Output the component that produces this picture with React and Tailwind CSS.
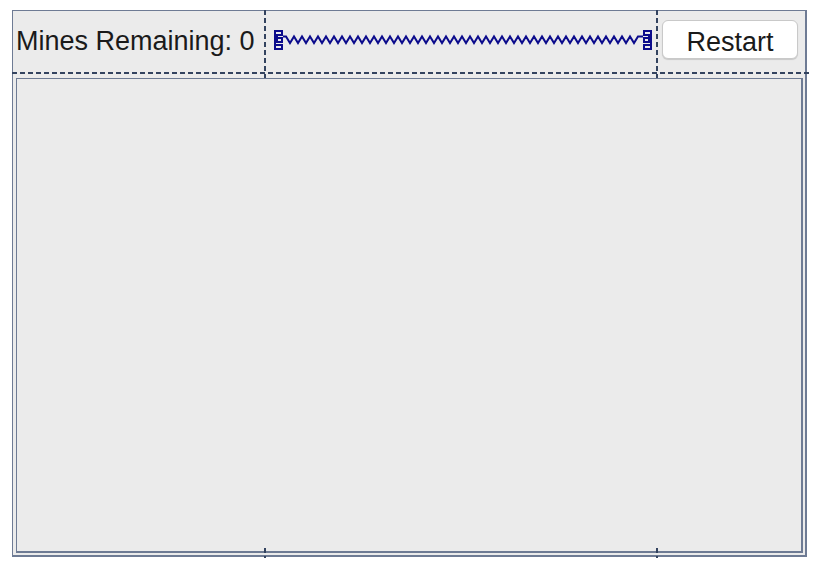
import { useMemo } from 'react'

const NAVY = '#0c0c8c'

// ends of the spring strut: three stacked boxes
function StrutEnd({ flip }) {
  return (
    <svg width="9" height="20" viewBox="0 0 9 20" shapeRendering="crispEdges" className={flip ? '-scale-x-100' : ''}>
      <rect x="1" y="1" width="7" height="4" fill="none" stroke={NAVY} strokeWidth="2" />
      <rect x="0" y="6" width="2" height="8" fill={NAVY} />
      <rect x="3" y="8" width="5" height="4" fill="none" stroke={NAVY} strokeWidth="2" />
      <rect x="2" y="6" width="2" height="2" fill={NAVY} />
      <rect x="1" y="15" width="7" height="4" fill="none" stroke={NAVY} strokeWidth="2" />
    </svg>
  )
}

function Spring() {
  const points = useMemo(() => {
    const pts = ['17,25.5', '20,25.5']
    for (let x = 24; x <= 368; x += 8) {
      pts.push(`${x},32`)
      pts.push(`${x + 4},25.5`)
    }
    pts.push('377,25.5')
    return pts.join(' ')
  }, [])

  return (
    <div className="relative w-[390px] h-[61px] shrink-0">
      <div className="absolute left-[8px] top-[19px]">
        <StrutEnd />
      </div>
      <svg width="390" height="61" className="absolute left-0 top-0">
        <polyline points={points} fill="none" stroke={NAVY} strokeWidth="2" strokeLinejoin="miter" />
      </svg>
      <div className="absolute left-[377px] top-[19px]">
        <StrutEnd flip />
      </div>
    </div>
  )
}

const vDash = 'bg-[repeating-linear-gradient(180deg,#33435f_0_5px,transparent_5px_8px)]'
const hDash = 'bg-[repeating-linear-gradient(90deg,#33435f_0_5px,transparent_5px_8px)]'

export default function App() {
  return (
    <div className="min-h-[568px] bg-white pl-[12px] pt-[10px] font-['Liberation_Sans',Arial,sans-serif] text-[#1a1a1a]">
      <div className="relative flex flex-col w-[795px] h-[547px] bg-[#ebebeb] border-l border-t border-r-2 border-b-2 border-[#6e7b94]">
        {/* top row */}
        <div className="flex h-[61px]">
          <div className="w-[251px] shrink-0 pl-[3px] pt-[15px] text-[27px] leading-[30px] whitespace-nowrap">
            Mines Remaining: 0
          </div>
          <div className="w-[2px] shrink-0" />
          <Spring />
          <div className="w-[2px] shrink-0" />
          <div className="flex-1 pl-[4px] pt-[9px]">
            <button className="w-[136px] h-[39px] rounded-[6px] bg-white border border-[#c9c9c9] shadow-[0_1px_1px_rgba(0,0,0,0.15)] pt-[4px] text-[27px] leading-[30px] text-[#1a1a1a]">
              Restart
            </button>
          </div>
        </div>
        <div className={`h-[2px] -ml-px -mr-[4px] ${hDash}`} />

        {/* board */}
        <div className="flex-1 mt-[4px] ml-[3px] mr-[2px] mb-[2px] bg-[#ebebeb] border-l border-t border-r-2 border-b-2 border-[#6e7b94]" />

        {/* layout guide lines */}
        <div className={`absolute left-[251px] top-[-1px] w-[2px] h-[68px] ${vDash}`} />
        <div className={`absolute left-[643px] top-[-1px] w-[2px] h-[68px] ${vDash}`} />
        <div className={`absolute left-[251px] bottom-[-3px] w-[2px] h-[10px] ${vDash}`} />
        <div className={`absolute left-[643px] bottom-[-3px] w-[2px] h-[10px] ${vDash}`} />
      </div>
    </div>
  )
}
